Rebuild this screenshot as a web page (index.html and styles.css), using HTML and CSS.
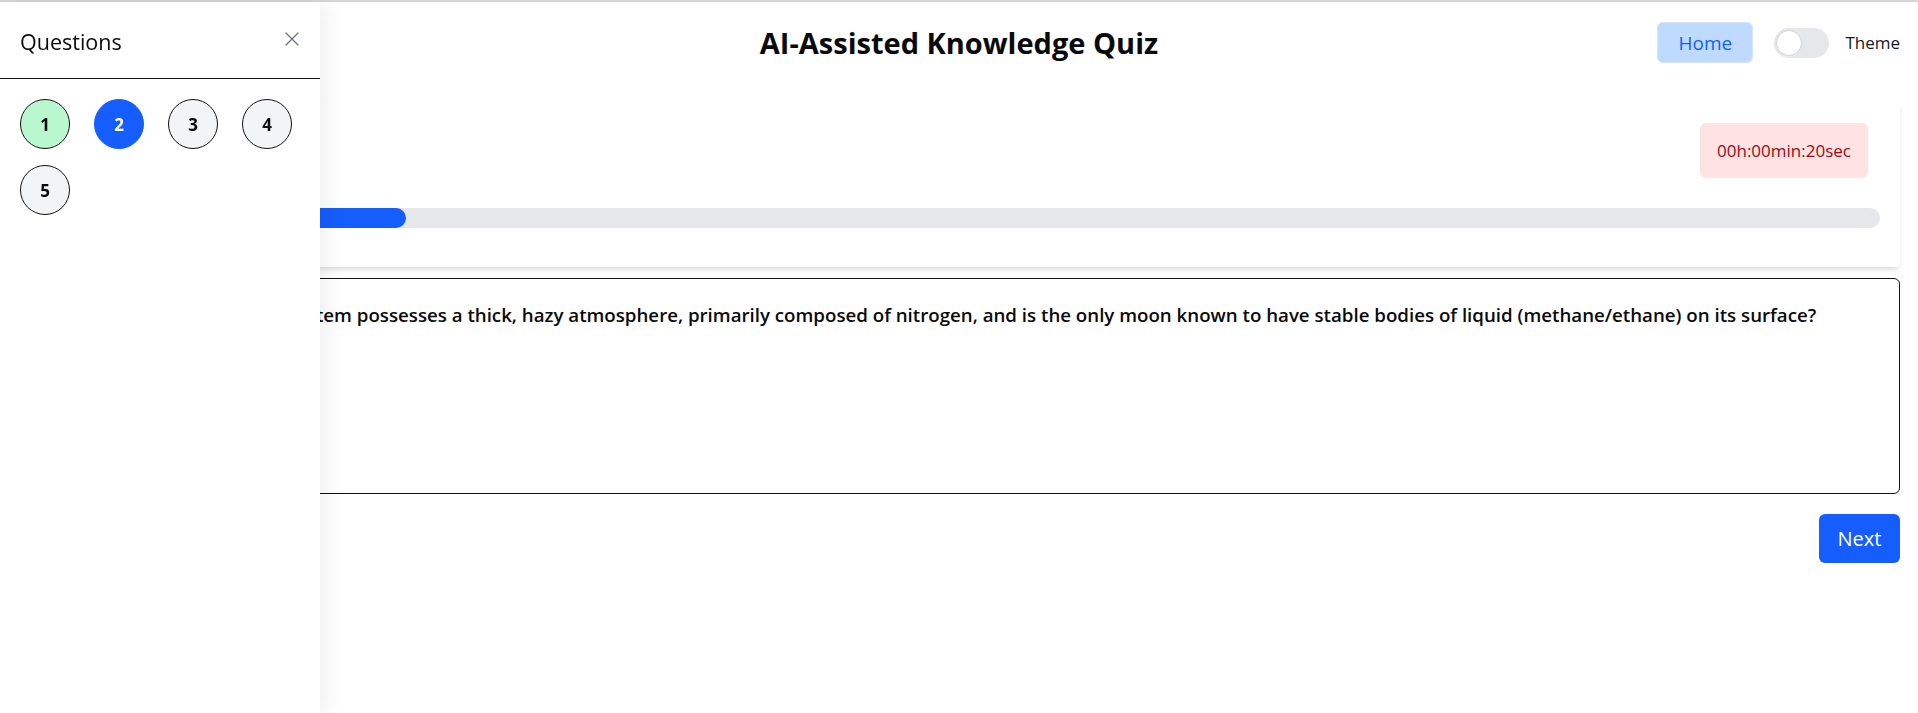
FILE: index.html
```html
<!DOCTYPE html>
<html lang="en">
<head>
<meta charset="utf-8">
<title>AI-Assisted Knowledge Quiz</title>
<link rel="stylesheet" href="styles.css">
</head>
<body>
<div class="page">
  <header class="topbar">
    <div class="topbar-side"></div>
    <h1 class="title">AI-Assisted Knowledge Quiz</h1>
    <div class="topbar-side topbar-actions">
      <button class="home-btn">Home</button>
      <label class="theme">
        <span class="switch"><span class="knob"></span></span>
        <span class="theme-label">Theme</span>
      </label>
    </div>
  </header>

  <main class="main">
    <section class="status-card">
      <div class="timer-row">
        <div class="timer">00h:00min:20sec</div>
      </div>
      <div class="progress"><div class="progress-fill" style="width:20%"></div></div>
    </section>

    <section class="question-box">
      <p class="question-text">2. Which moon in our Solar System possesses a thick, hazy atmosphere, primarily composed of nitrogen, and is the only moon known to have stable bodies of liquid (methane/ethane) on its surface?</p>
    </section>

    <div class="actions">
      <button class="next-btn">Next</button>
    </div>
  </main>
</div>

<aside class="sidebar">
  <div class="sidebar-head">
    <span class="sidebar-title">Questions</span>
    <button class="close-btn" aria-label="Close">
      <svg width="16" height="16" viewBox="0 0 16 16" fill="none" stroke="#6b7280" stroke-width="1.3" stroke-linecap="round"><path d="M2 2L14 14M14 2L2 14"/></svg>
    </button>
  </div>
  <div class="q-grid">
    <button class="q-dot q-done">1</button>
    <button class="q-dot q-current">2</button>
    <button class="q-dot">3</button>
    <button class="q-dot">4</button>
    <button class="q-dot">5</button>
  </div>
</aside>
</body>
</html>
```

FILE: styles.css
```css
* { box-sizing: border-box; }

html, body { margin: 0; padding: 0; }

body {
  background: #ffffff;
  color: #0a0a0a;
  font-family: "Open Sans", "Noto Sans", sans-serif;
  border-top: 2px solid #d6d6d6;
  min-height: 100vh;
}

button { font-family: inherit; cursor: pointer; }

.page { padding: 0 18px; }

.topbar {
  display: grid;
  grid-template-columns: 1fr auto 1fr;
  align-items: center;
  padding: 20px 0 39px;
}

.title {
  margin: 0;
  font-size: 29px;
  font-weight: 700;
  line-height: 41px;
}

.topbar-actions {
  display: flex;
  justify-content: flex-end;
  align-items: center;
  gap: 21px;
}

.home-btn {
  width: 96px;
  height: 41px;
  border: 1px solid #d3e4fb;
  border-radius: 6px;
  background: #bedbff;
  color: #155dfc;
  font-size: 19px;
  padding: 0;
}

.theme {
  display: flex;
  align-items: center;
  gap: 16px;
}

.switch {
  width: 55px;
  height: 30px;
  border-radius: 15px;
  background: #e5e7eb;
  display: flex;
  align-items: center;
  padding: 0 2px;
}

.knob {
  width: 26px;
  height: 26px;
  border-radius: 50%;
  background: #ffffff;
  border: 1px solid #d1d5db;
}

.theme-label {
  font-size: 17px;
  font-weight: 500;
  color: #111827;
}

.main { display: flex; flex-direction: column; }

.status-card {
  background: #ffffff;
  border-radius: 4px;
  box-shadow: 0 4px 6px -1px rgba(0,0,0,0.1), 0 2px 4px -2px rgba(0,0,0,0.1);
  padding: 21px 20px 39px;
}

.timer-row { display: flex; justify-content: flex-end; }

.timer {
  margin-right: 12px;
  width: 168px;
  height: 55px;
  display: flex;
  align-items: center;
  justify-content: center;
  border-radius: 6px;
  background: #ffe2e2;
  color: #9f0712;
  font-size: 17px;
}

.progress {
  margin-top: 30px;
  height: 20px;
  border-radius: 10px;
  background: #e5e7eb;
  overflow: hidden;
}

.progress-fill {
  height: 100%;
  border-radius: 10px;
  background: #155dfc;
}

.question-box {
  margin-top: 11px;
  min-height: 216px;
  border: 1px solid #111111;
  border-radius: 6px;
  padding: 22px 20px;
}

.question-text {
  margin: 0;
  font-size: 18.7px;
  font-weight: 600;
  line-height: 28px;
}

.actions {
  display: flex;
  justify-content: flex-end;
  margin-top: 20px;
}

.next-btn {
  width: 81px;
  height: 49px;
  border: none;
  border-radius: 6px;
  background: #155dfc;
  color: #ffffff;
  font-size: 20px;
  padding: 0;
}

.sidebar {
  position: fixed;
  top: 2px;
  left: 0;
  bottom: 0;
  width: 320px;
  background: #ffffff;
  box-shadow: 4px 0 22px rgba(0,0,0,0.08);
}

.sidebar-head {
  height: 77px;
  display: flex;
  justify-content: space-between;
  align-items: center;
  padding: 0 20px;
  border-bottom: 1px solid #111111;
}

.sidebar-title {
  font-size: 21.5px;
  font-weight: 500;
  margin-top: 2px;
}

.close-btn {
  border: none;
  background: none;
  padding: 0;
  width: 16px;
  height: 16px;
  margin-top: -2px;
  display: flex;
}

.q-grid {
  display: grid;
  grid-template-columns: repeat(4, 58px);
  gap: 16px;
  padding: 20px;
}

.q-dot {
  width: 50px;
  height: 50px;
  border-radius: 50%;
  border: 1px solid #111111;
  background: #f3f4f6;
  color: #0a0a0a;
  font-size: 17px;
  font-weight: 700;
  padding: 0;
}

.q-done { background: #b9f8cf; }

.q-current {
  background: #155dfc;
  border-color: #155dfc;
  color: #ffffff;
}
```
